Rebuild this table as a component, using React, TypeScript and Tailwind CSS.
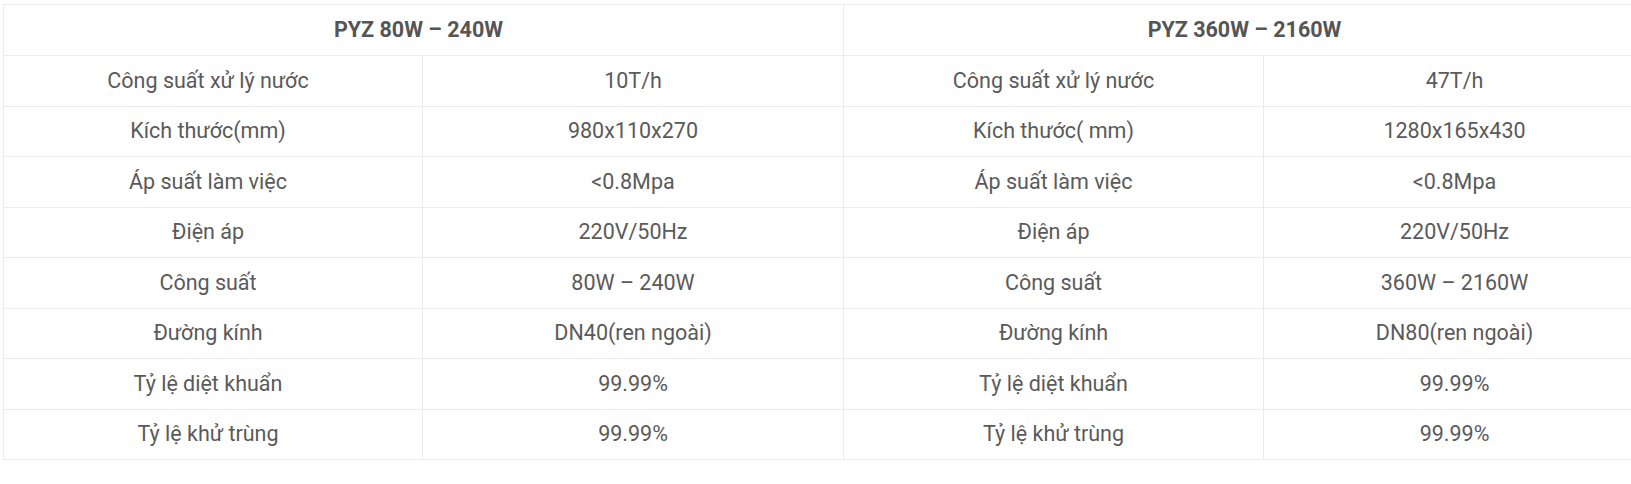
import React from 'react';

const left: [string, string][] = [
    ['Công suất xử lý nước', '10T/h'],
    ['Kích thước(mm)', '980x110x270'],
    ['Áp suất làm việc', '<0.8Mpa'],
    ['Điện áp', '220V/50Hz'],
    ['Công suất', '80W – 240W'],
    ['Đường kính', 'DN40(ren ngoài)'],
    ['Tỷ lệ diệt khuẩn', '99.99%'],
    ['Tỷ lệ khử trùng', '99.99%'],
];

const right: [string, string][] = [
    ['Công suất xử lý nước', '47T/h'],
    ['Kích thước( mm)', '1280x165x430'],
    ['Áp suất làm việc', '<0.8Mpa'],
    ['Điện áp', '220V/50Hz'],
    ['Công suất', '360W – 2160W'],
    ['Đường kính', 'DN80(ren ngoài)'],
    ['Tỷ lệ diệt khuẩn', '99.99%'],
    ['Tỷ lệ khử trùng', '99.99%'],
];

const cell = 'border border-[#ebebeb] text-center align-middle p-0';

export default function App() {
    return (
        <div className="w-full h-[484px] overflow-hidden bg-white pt-1 pl-[3px] font-['Roboto',sans-serif] text-[21.5px] text-[#5a5a5a]">
            <table className="border-collapse table-fixed w-[1642px]">
                <colgroup>
                    <col className="w-[419px]" />
                    <col className="w-[421px]" />
                    <col className="w-[420px]" />
                    <col className="w-[382px]" />
                </colgroup>
                <thead>
                    <tr className="h-[51px]">
                        <th colSpan={2} className={`${cell} pr-[10px] font-bold text-[#555555]`}>PYZ 80W – 240W</th>
                        <th colSpan={2} className={`${cell} font-bold text-[#555555]`}>PYZ 360W – 2160W</th>
                    </tr>
                </thead>
                <tbody>
                    {left.map((row, i) => (
                        <tr key={i} className="h-[50.5px]">
                            <td className={`${cell} pr-[10px]`}>{row[0]}</td>
                            <td className={cell}>{row[1]}</td>
                            <td className={cell}>{right[i][0]}</td>
                            <td className={cell}>{right[i][1]}</td>
                        </tr>
                    ))}
                </tbody>
            </table>
        </div>
    );
}
